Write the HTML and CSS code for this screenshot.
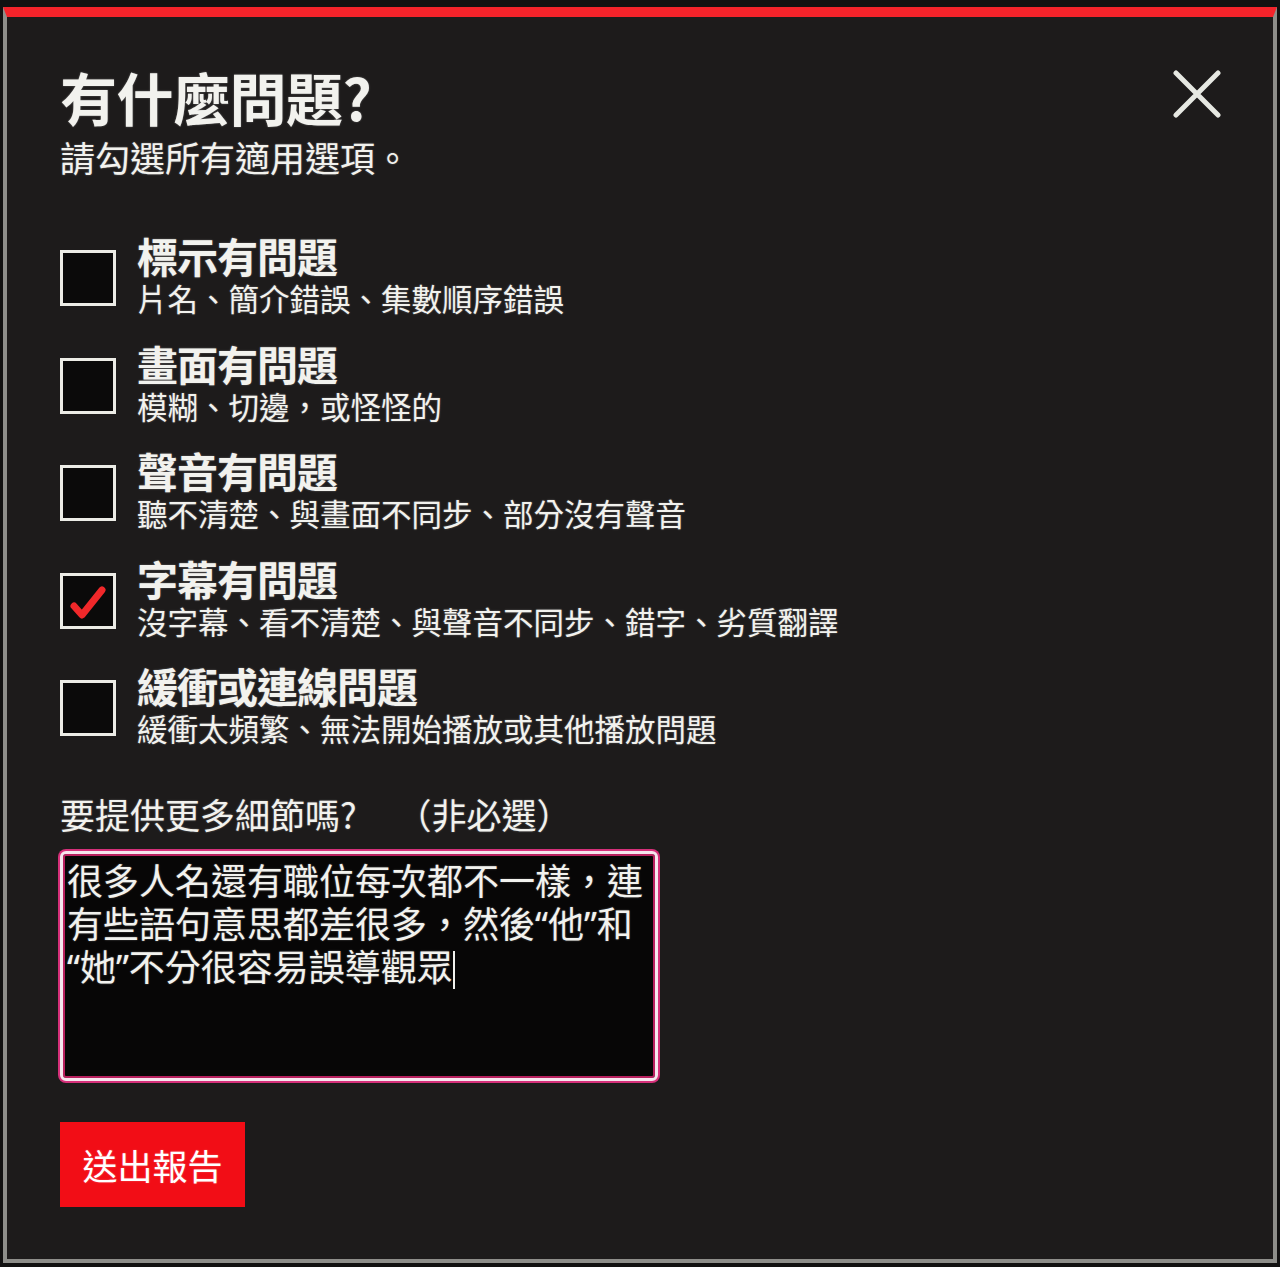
FILE: index.html
```html
<!DOCTYPE html>
<html lang="zh-Hant">
<head>
  <meta charset="UTF-8">
  <meta name="viewport" content="width=device-width, initial-scale=1.0">
  <title>回報問題</title>
  <link rel="stylesheet" href="styles.css">
</head>
<body>
  <div class="panel">
    <!-- 標題列 -->
    <div class="header">
      <div>
        <h1>有什麼問題?</h1>
        <p class="hint">請勾選所有適用選項。</p>
      </div>
      <button class="close" aria-label="關閉">
        <svg width="48" height="48" viewBox="0 0 48 48">
          <path d="M3 3 L45 45 M45 3 L3 45" stroke="#e6e8e2" stroke-width="5" stroke-linecap="round"/>
        </svg>
      </button>
    </div>

    <!-- 問題選項 -->
    <ul class="options">
      <li class="option">
        <span class="box"></span>
        <div>
          <div class="opt-title">標示有問題</div>
          <div class="opt-desc">片名、簡介錯誤、集數順序錯誤</div>
        </div>
      </li>
      <li class="option">
        <span class="box"></span>
        <div>
          <div class="opt-title">畫面有問題</div>
          <div class="opt-desc">模糊、切邊，或怪怪的</div>
        </div>
      </li>
      <li class="option">
        <span class="box"></span>
        <div>
          <div class="opt-title">聲音有問題</div>
          <div class="opt-desc">聽不清楚、與畫面不同步、部分沒有聲音</div>
        </div>
      </li>
      <li class="option">
        <span class="box checked">
          <svg width="40" height="40" viewBox="0 0 40 40">
            <path d="M6 24 L14 33 L34 8" fill="none" stroke="#f0282a" stroke-width="7" stroke-linecap="round" stroke-linejoin="round"/>
          </svg>
        </span>
        <div>
          <div class="opt-title">字幕有問題</div>
          <div class="opt-desc">沒字幕、看不清楚、與聲音不同步、錯字、劣質翻譯</div>
        </div>
      </li>
      <li class="option">
        <span class="box"></span>
        <div>
          <div class="opt-title">緩衝或連線問題</div>
          <div class="opt-desc">緩衝太頻繁、無法開始播放或其他播放問題</div>
        </div>
      </li>
    </ul>

    <!-- 補充說明 -->
    <label class="more" for="details">要提供更多細節嗎?<span class="optional">（非必選）</span></label>
    <div class="details" id="details">很多人名還有職位每次都不一樣，連有些語句意思都差很多，然後“他”和“她”不分很容易誤導觀眾<span class="caret"></span></div>

    <button class="submit">送出報告</button>
  </div>
</body>
</html>
```

FILE: styles.css
```css
html, body {
  margin: 0;
  background: #121111;
}
body {
  padding: 7px 3px 4px 3px;
  font-family: "Noto Sans CJK SC", "Noto Sans CJK TC", "Noto Sans", sans-serif;
  color: #f2f2ee;
  text-shadow: 0 0 2px rgba(255,255,255,0.35);
}
.panel {
  box-sizing: border-box;
  height: 1256px;
  background: #1d1b1b;
  border-top: 10px solid #f4232a;
  border-left: 4px solid #8e8e8a;
  border-right: 4px solid #8e8e8a;
  border-bottom: 4px solid #8e8e8a;
  padding: 44px 52px 0 53px;
}
.header {
  display: flex;
  justify-content: space-between;
  align-items: flex-start;
}
h1 {
  margin: 0;
  font-size: 57px;
  font-weight: 700;
  line-height: 70px;
  letter-spacing: -0.5px;
}
.hint {
  margin: 3px 0 0 0;
  font-size: 35px;
  line-height: 46px;
}
.close {
  background: none;
  border: none;
  padding: 0;
  margin-top: 9px;
  margin-right: 0;
  cursor: pointer;
}
.options {
  list-style: none;
  margin: 51px 0 0 0;
  padding: 0;
}
.option {
  display: flex;
  align-items: flex-start;
  gap: 21px;
  height: 107.5px;
}
.box {
  box-sizing: border-box;
  flex: none;
  width: 56px;
  height: 56px;
  margin-top: 19px;
  border: 3px solid #ecece6;
  background: #0b0a0a;
  display: flex;
  align-items: center;
  justify-content: center;
}
.box svg {
  margin-top: 2px;
}
.opt-title {
  font-size: 41px;
  font-weight: 700;
  line-height: 48px;
  letter-spacing: -1px;
}
.opt-desc {
  font-size: 30.5px;
  line-height: 38px;
}
.more {
  display: block;
  margin-top: 22px;
  font-size: 35px;
  line-height: 46px;
}
.optional {
  margin-left: 40px;
}
.details {
  box-sizing: border-box;
  width: 598px;
  height: 230px;
  margin-top: 14px;
  padding: 6px 4px;
  border: 3px solid #f6e6ee;
  border-radius: 6px;
  box-shadow: 0 0 0 2px #d6307a, inset 0 0 0 2px #b8205e;
  background: #070606;
  font-family: "Noto Sans", "Noto Sans CJK SC", sans-serif;
  font-size: 36px;
  line-height: 43px;
  word-break: break-all;
}
.caret {
  display: inline-block;
  width: 2px;
  height: 38px;
  background: #f2f2ee;
  vertical-align: -8px;
}
.submit {
  display: block;
  margin-top: 41px;
  width: 185px;
  height: 85px;
  border: none;
  background: #f20d16;
  color: #fff;
  font-family: inherit;
  font-size: 35px;
  text-shadow: 0 0 2px rgba(255,255,255,0.3);
  cursor: pointer;
}
```
